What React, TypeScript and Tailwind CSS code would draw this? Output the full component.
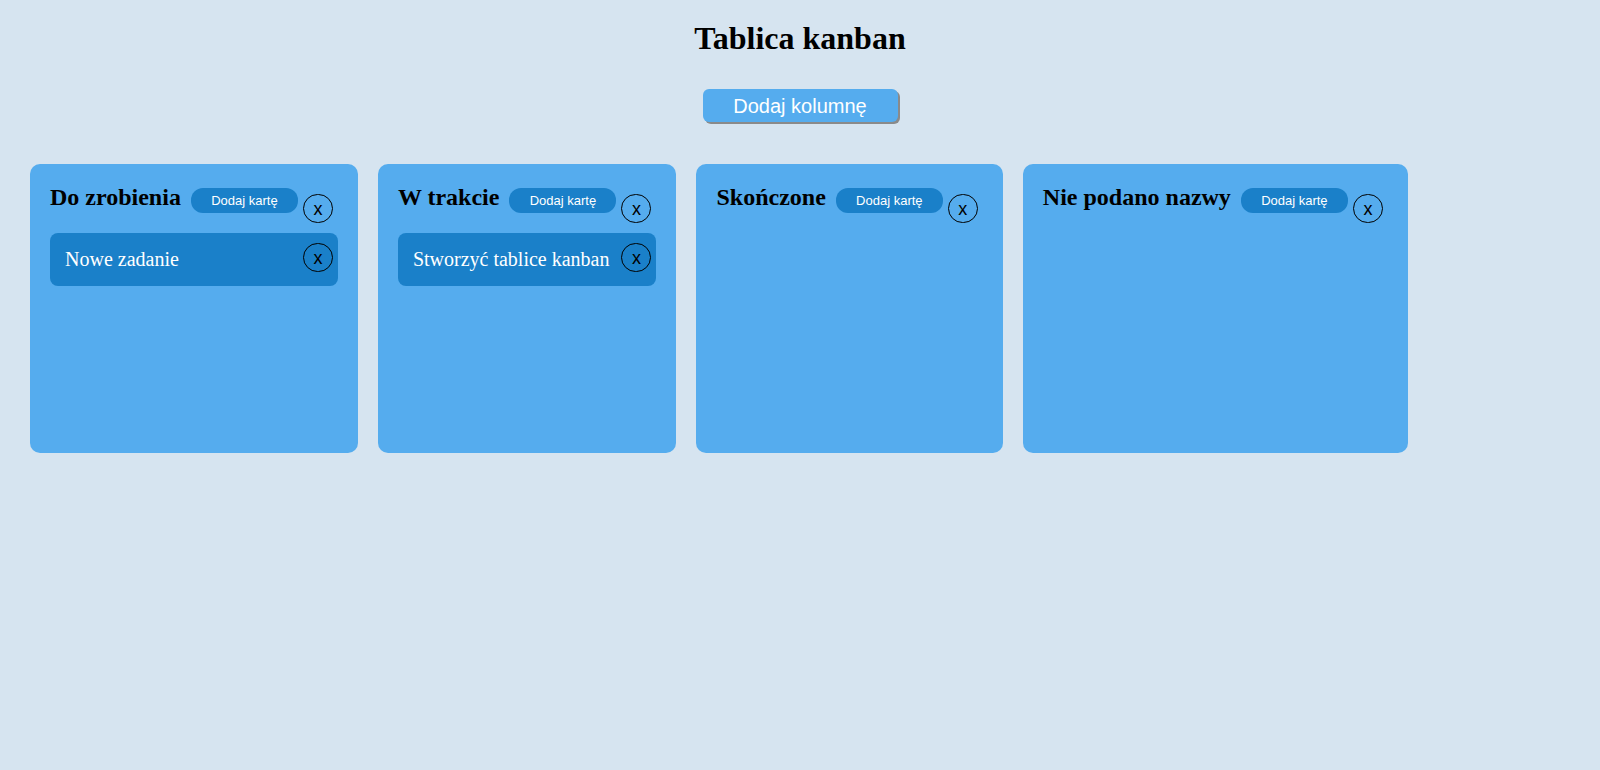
import { useState } from "react";

type Column = {
  id: number;
  title: string;
  cards: string[];
};

const initialColumns: Column[] = [
  { id: 1, title: "Do zrobienia", cards: ["Nowe zadanie"] },
  { id: 2, title: "W trakcie", cards: ["Stworzyć tablice kanban"] },
  { id: 3, title: "Skończone", cards: [] },
  { id: 4, title: "Nie podano nazwy", cards: [] },
];

function CloseButton({ onClick, className }: { onClick: () => void; className?: string }) {
  return (
    <button
      onClick={onClick}
      className={
        "w-[30px] h-[29px] shrink-0 rounded-full border border-black flex items-center justify-center text-[18px] leading-none text-black font-['Liberation_Sans',Arial,sans-serif] mr-[5px] " +
        (className ?? "")
      }
    >
      <span>x</span>
    </button>
  );
}

export default function App() {
  const [columns, setColumns] = useState<Column[]>(initialColumns);

  const addColumn = () => {
    setColumns([...columns, { id: Date.now(), title: "Nie podano nazwy", cards: [] }]);
  };
  const removeColumn = (id: number) => {
    setColumns(columns.filter((c) => c.id !== id));
  };
  const addCard = (id: number) => {
    setColumns(columns.map((c) => (c.id === id ? { ...c, cards: [...c.cards, "Nowe zadanie"] } : c)));
  };
  const removeCard = (id: number, index: number) => {
    setColumns(
      columns.map((c) => (c.id === id ? { ...c, cards: c.cards.filter((_, i) => i !== index) } : c))
    );
  };

  return (
    <div className="min-h-[770px] bg-[#d6e4f0] flex flex-col items-center">
      <h1 className="mt-[20px] text-[32px] leading-[37px] font-bold text-black font-['Liberation_Serif','Times_New_Roman',serif]">
        Tablica kanban
      </h1>
      <button
        onClick={addColumn}
        className="mt-[32px] w-[195px] h-[33px] rounded-[6px] bg-[#55acee] text-white text-[20px] leading-none shadow-[2px_2px_0_#8a8a8a] font-['Liberation_Sans',Arial,sans-serif]"
      >
        Dodaj kolumnę
      </button>

      <div className="self-stretch mt-[42px] px-[30px] flex items-start gap-[20px]">
        {columns.map((col) => (
          <div
            key={col.id}
            className="w-fit h-[289px] bg-[#55acee] rounded-[10px] pt-[19px] px-[20px] flex flex-col"
          >
            <div className="flex items-start">
              <h2 className="text-[24px] leading-[28px] font-bold text-black whitespace-nowrap mr-[10px] font-['Liberation_Serif','Times_New_Roman',serif]">
                {col.title}
              </h2>
              <button
                onClick={() => addCard(col.id)}
                className="mt-[5px] w-[107px] h-[25px] shrink-0 rounded-[12px] bg-[#1a80c9] text-white text-[13px] leading-none mr-[5px] font-['Liberation_Sans',Arial,sans-serif]"
              >
                Dodaj kartę
              </button>
              <CloseButton className="mt-[11px]" onClick={() => removeColumn(col.id)} />
            </div>
            {col.cards.map((card, i) => (
              <div
                key={i}
                className="mt-[10px] h-[53px] rounded-[8px] bg-[#1a80c9] flex items-center pl-[15px]"
              >
                <span className="flex-1 text-white text-[20px] leading-[23px] whitespace-nowrap mr-[12px] font-['Liberation_Serif','Times_New_Roman',serif]">
                  {card}
                </span>
                <CloseButton className="self-start mt-[10px]" onClick={() => removeCard(col.id, i)} />
              </div>
            ))}
          </div>
        ))}
      </div>
    </div>
  );
}
